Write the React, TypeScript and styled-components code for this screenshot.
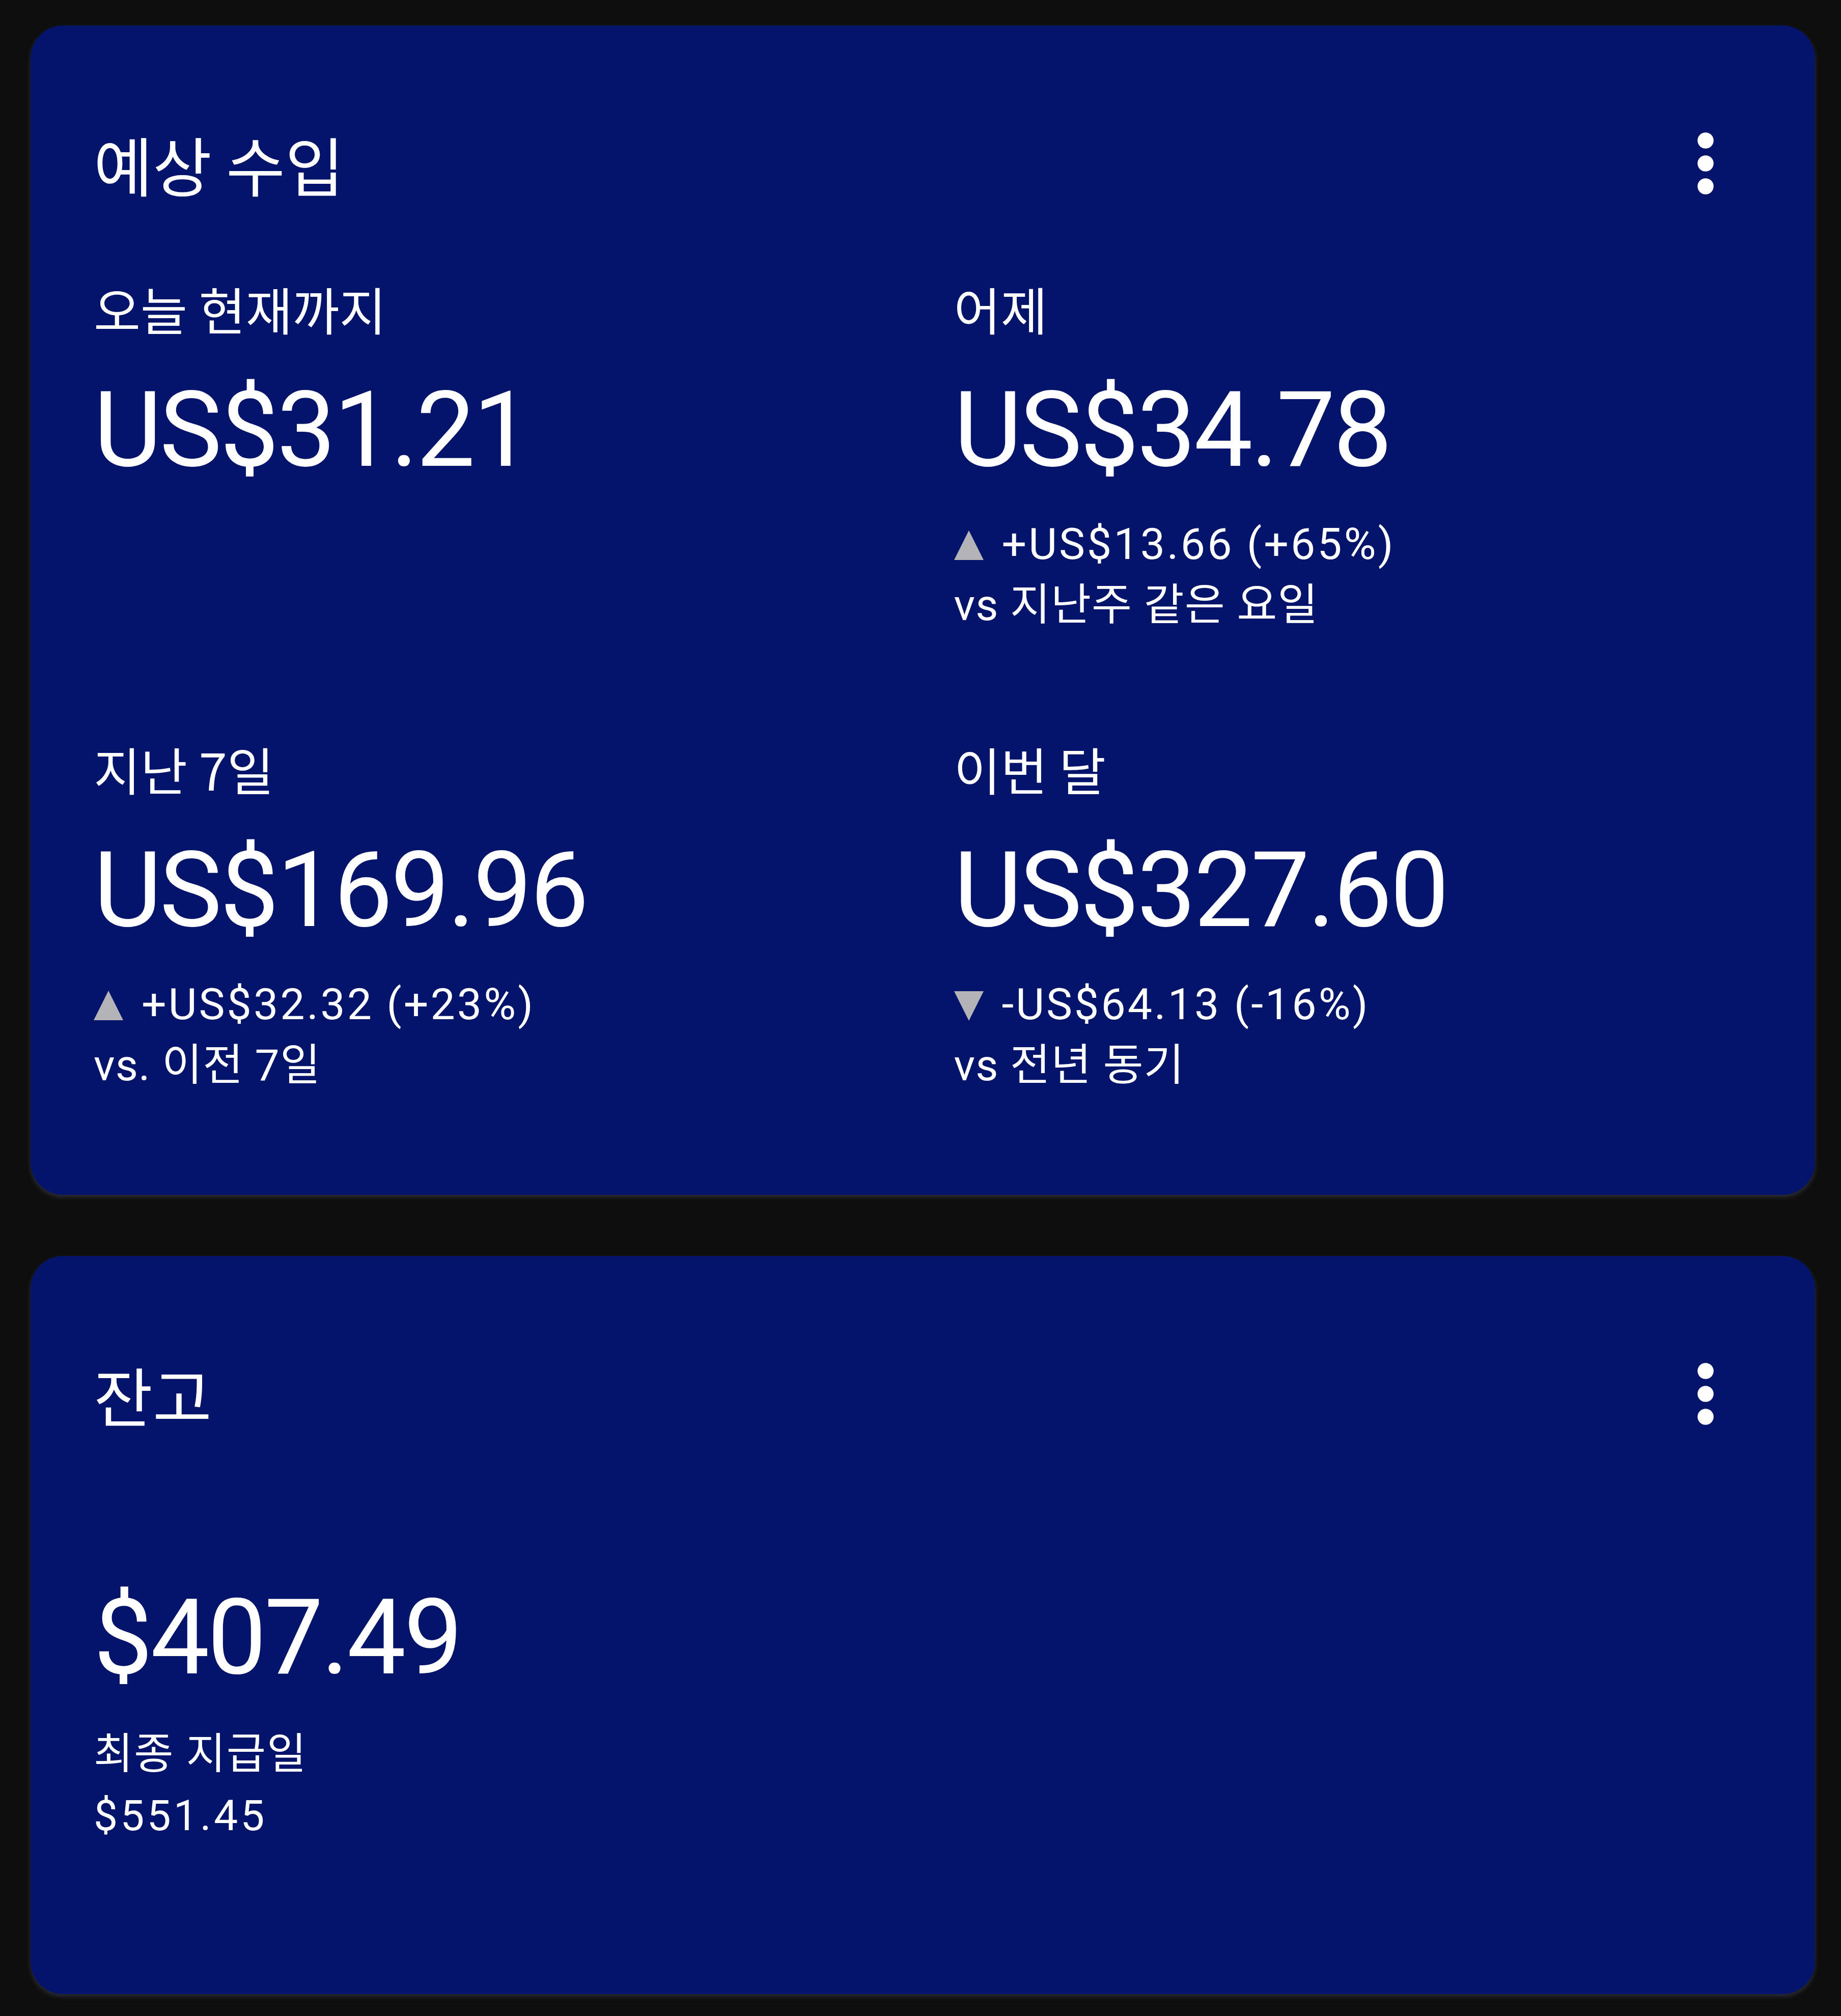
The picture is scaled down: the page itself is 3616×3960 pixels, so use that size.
import styled, { createGlobalStyle } from 'styled-components';

const GlobalStyle = createGlobalStyle`
  html, body {
    margin: 0;
    padding: 0;
    background: #0e0e0e;
  }
  body {
    font-family: Roboto, "Noto Sans CJK KR", sans-serif;
    color: #ffffff;
  }
`;

const Page = styled.main`
  width: 3616px;
  height: 3960px;
  box-sizing: border-box;
  padding: 50px 51px 0 60px;
  display: flex;
  flex-direction: column;
  gap: 120px;
`;

const Card = styled.section<{ $minHeight?: number }>`
  background: #03146a;
  border-radius: 64px;
  box-sizing: border-box;
  padding: 199px 125px 194px 124px;
  min-height: ${(p) => (p.$minHeight ? `${p.$minHeight}px` : 'auto')};
  box-shadow: 0 5px 10px rgba(70, 70, 85, 0.55);
  display: flex;
  flex-direction: column;
`;

const Header = styled.header`
  display: flex;
  align-items: center;
  justify-content: space-between;
  height: 144px;
`;

const Title = styled.h2`
  margin: 0;
  font-family: "Noto Sans CJK KR", sans-serif;
  font-weight: 400;
  font-size: 126px;
  line-height: 144px;
`;

const MenuButton = styled.button`
  background: none;
  border: 0;
  padding: 0;
  width: 180px;
  height: 180px;
  color: #fff;
  display: flex;
  align-items: center;
  justify-content: center;
`;

const Grid = styled.div`
  margin-top: 153px;
  display: grid;
  grid-template-columns: 1fr 1fr;
  column-gap: 123px;
  row-gap: 201px;
`;

const Stat = styled.div`
  display: flex;
  flex-direction: column;
`;

const Label = styled.div`
  font-family: "Noto Sans CJK KR", sans-serif;
  font-size: 100px;
  line-height: 120px;
`;

const BigValue = styled.div<{ $top?: number }>`
  font-family: Roboto, sans-serif;
  font-size: 206px;
  line-height: 240px;
  letter-spacing: -4px;
  margin-top: ${(p) => p.$top ?? 59}px;
`;

const Delta = styled.div`
  margin-top: 44px;
  display: flex;
  flex-direction: column;
  font-size: 86px;
  line-height: 120px;
`;

const DeltaLine = styled.div`
  display: flex;
  align-items: center;
  font-family: Roboto, sans-serif;
  letter-spacing: 4px;
`;

const Arrow = styled.span<{ $down?: boolean }>`
  width: 0;
  height: 0;
  border-left: 29px solid transparent;
  border-right: 29px solid transparent;
  ${(p) =>
    p.$down
      ? 'border-top: 58px solid #b4b4b8; margin-top: 6px;'
      : 'border-bottom: 58px solid #b4b4b8; margin-top: 4px;'}
  margin-right: 36px;
`;

const Compare = styled.div`
  font-family: Roboto, "Noto Sans CJK KR", sans-serif;
  letter-spacing: 1px;
`;

const Detail = styled.div<{ $latin?: boolean }>`
  font-family: Roboto, "Noto Sans CJK KR", sans-serif;
  font-size: 84px;
  line-height: 121px;
  letter-spacing: ${(p) => (p.$latin ? 5 : 2)}px;
`;

const Details = styled.div`
  margin-top: 48px;
  display: flex;
  flex-direction: column;
`;

function MoreIcon() {
  return (
    <svg width="180" height="180" viewBox="0 0 24 24" fill="currentColor">
      <circle cx="12" cy="6" r="2.1" />
      <circle cx="12" cy="12" r="2.1" />
      <circle cx="12" cy="18" r="2.1" />
    </svg>
  );
}

interface IStat {
  label: string;
  value: string;
  change?: string;
  down?: boolean;
  compare?: string;
}

const stats: IStat[] = [
  { label: '오늘 현재까지', value: 'US$31.21' },
  { label: '어제', value: 'US$34.78', change: '+US$13.66 (+65%)', compare: 'vs 지난주 같은 요일' },
  { label: '지난 7일', value: 'US$169.96', change: '+US$32.32 (+23%)', compare: 'vs. 이전 7일' },
  { label: '이번 달', value: 'US$327.60', change: '-US$64.13 (-16%)', down: true, compare: 'vs 전년 동기' },
];

export default function App() {
  return (
    <>
      <GlobalStyle />
      <Page>
        <Card>
          <Header>
            <Title>예상 수입</Title>
            <MenuButton aria-label="more">
              <MoreIcon />
            </MenuButton>
          </Header>
          <Grid>
            {stats.map((s) => (
              <Stat key={s.label}>
                <Label>{s.label}</Label>
                <BigValue>{s.value}</BigValue>
                {s.change && (
                  <Delta>
                    <DeltaLine>
                      <Arrow $down={s.down} />
                      {s.change}
                    </DeltaLine>
                    <Compare>{s.compare}</Compare>
                  </Delta>
                )}
              </Stat>
            ))}
          </Grid>
        </Card>
        <Card $minHeight={1450}>
          <Header>
            <Title>잔고</Title>
            <MenuButton aria-label="more">
              <MoreIcon />
            </MenuButton>
          </Header>
          <BigValue $top={287}>$407.49</BigValue>
          <Details>
            <Detail>최종 지급일</Detail>
            <Detail $latin>$551.45</Detail>
          </Details>
        </Card>
      </Page>
    </>
  );
}
